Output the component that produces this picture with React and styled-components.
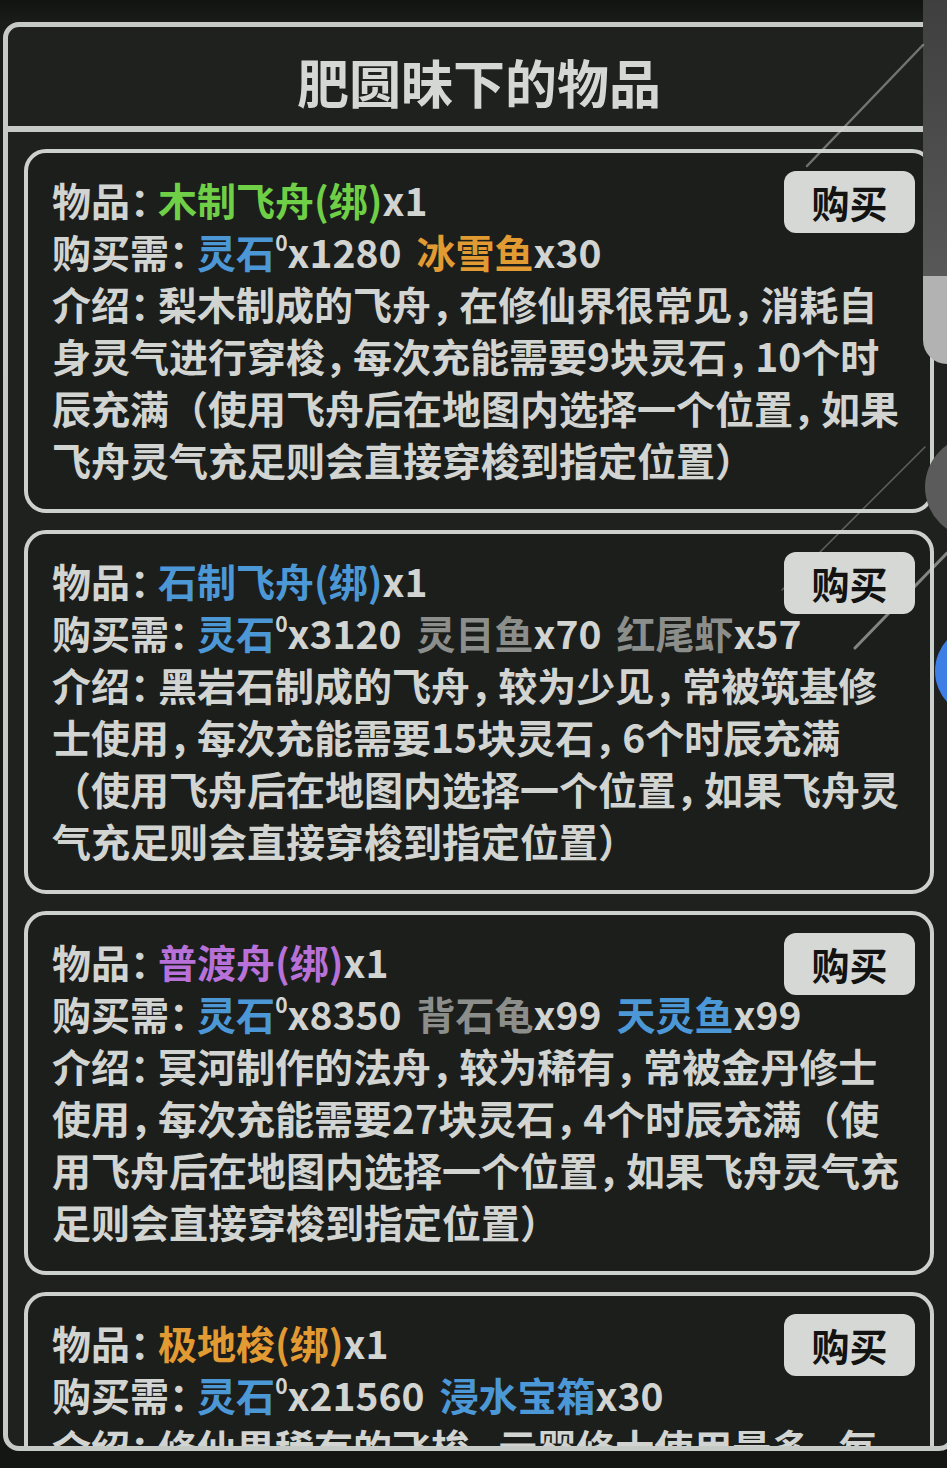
import React from "react";
import styled, { createGlobalStyle } from "styled-components";

const GlobalStyle = createGlobalStyle`
  html, body {
    margin: 0;
    padding: 0;
    background: #141614;
    overflow: hidden;
  }
  body {
    font-family: "Noto Sans CJK SC", "Noto Sans", sans-serif;
    font-weight: 700;
  }
`;

const C = {
  text: "#d1d4d1",
  green: "#6fcf46",
  blue: "#4c98d7",
  orange: "#e29a32",
  purple: "#b771d9",
  grey: "#8c8e8b",
};

const items = [
  {
    name: "木制飞舟(绑)",
    color: C.green,
    qty: "x1",
    cost: [
      { n: "灵石", c: C.blue, q: "x1280", sup: true },
      { n: "冰雪鱼", c: C.orange, q: "x30" },
    ],
    desc: [
      "介绍：梨木制成的飞舟，在修仙界很常见，消耗自",
      "身灵气进行穿梭，每次充能需要9块灵石，10个时",
      "辰充满（使用飞舟后在地图内选择一个位置，如果",
      "飞舟灵气充足则会直接穿梭到指定位置）",
    ],
  },
  {
    name: "石制飞舟(绑)",
    color: C.blue,
    qty: "x1",
    cost: [
      { n: "灵石", c: C.blue, q: "x3120", sup: true },
      { n: "灵目鱼", c: C.grey, q: "x70" },
      { n: "红尾虾", c: C.grey, q: "x57" },
    ],
    desc: [
      "介绍：黑岩石制成的飞舟，较为少见，常被筑基修",
      "士使用，每次充能需要15块灵石，6个时辰充满",
      "（使用飞舟后在地图内选择一个位置，如果飞舟灵",
      "气充足则会直接穿梭到指定位置）",
    ],
  },
  {
    name: "普渡舟(绑)",
    color: C.purple,
    qty: "x1",
    cost: [
      { n: "灵石", c: C.blue, q: "x8350", sup: true },
      { n: "背石龟", c: C.grey, q: "x99" },
      { n: "天灵鱼", c: C.blue, q: "x99" },
    ],
    desc: [
      "介绍：冥河制作的法舟，较为稀有，常被金丹修士",
      "使用，每次充能需要27块灵石，4个时辰充满（使",
      "用飞舟后在地图内选择一个位置，如果飞舟灵气充",
      "足则会直接穿梭到指定位置）",
    ],
  },
  {
    name: "极地梭(绑)",
    color: C.orange,
    qty: "x1",
    cost: [
      { n: "灵石", c: C.blue, q: "x21560", sup: true },
      { n: "浸水宝箱", c: C.blue, q: "x30" },
    ],
    desc: [
      "介绍：修仙界稀有的飞梭，元婴修士使用最多，每",
      "次充能需要45块灵石，2个时辰充满（使用飞舟后",
      "在地图内选择一个位置，如果飞舟灵气充足则会直",
      "接穿梭到指定位置）",
    ],
  },
];

const Screen = styled.div`
  position: relative;
  width: 947px;
  height: 1468px;
  overflow: hidden;
  background: linear-gradient(#111311 0px, #1a1c1a 22px, #141614 1450px);
  padding-top: 22px;
  box-sizing: border-box;
`;

const Frame = styled.div`
  margin-left: 3px;
  width: 952px;
  height: 1429px;
  box-sizing: border-box;
  border: 5px solid #c6cac6;
  border-radius: 16px;
  background: #1f211f;
  display: flex;
  flex-direction: column;
  overflow: hidden;
`;

const Header = styled.div`
  flex: none;
  height: 105px;
  box-sizing: border-box;
  padding-top: 10px;
  border-bottom: 6px solid #c6cac6;
  display: flex;
  align-items: center;
  justify-content: center;
  color: #d4d7d4;
  font-size: 52px;
  line-height: 1;
`;

const List = styled.div`
  flex: 1;
  min-height: 0;
  overflow: hidden;
  padding: 17px 16px 0;
  display: flex;
  flex-direction: column;
  gap: 17px;
`;

const Card = styled.div`
  flex: none;
  display: grid;
  grid-template-columns: 1fr auto;
  border: 4px solid #cdd1cd;
  border-radius: 22px;
  background: #1c1e1c;
  padding: 18px 15px 24px 24px;
`;

const Body = styled.div`
  grid-column: 1 / -1;
  grid-row: 1;
  padding-top: 2px;
  color: ${C.text};
  font-size: 39px;
  line-height: 52px;
`;

const Line = styled.div`
  white-space: nowrap;
`;

const Hl = styled.span`
  color: ${(p) => p.$c};
`;

const Cost = styled.span`
  & + & {
    margin-left: 15px;
  }
`;

const Punct = styled.span`
  letter-spacing: -0.28em;
`;

const Sup = styled.span`
  font-size: 21px;
  line-height: 0;
  vertical-align: 17px;
  color: ${C.text};
`;

const BuyButton = styled.button`
  grid-column: 2;
  grid-row: 1;
  align-self: start;
  z-index: 1;
  width: 131px;
  height: 62px;
  border: none;
  border-radius: 12px;
  background: #d5d8d5;
  color: #121312;
  font-family: inherit;
  font-weight: 700;
  font-size: 38px;
  line-height: 62px;
  padding: 0;
`;

const Edge = styled.div`
  position: absolute;
  left: ${(p) => p.$left}px;
  top: ${(p) => p.$top}px;
  width: ${(p) => p.$w}px;
  height: ${(p) => p.$h}px;
  background: ${(p) => p.$bg};
  border-radius: ${(p) => p.$r || "0"};
  pointer-events: none;
`;

const Streaks = styled.svg`
  position: absolute;
  left: 0;
  top: 0;
  pointer-events: none;
`;

const fmt = (s) =>
  s.split(/([，：])/).map((p, i) =>
    p === "，" || p === "：" ? <Punct key={i}>{p}</Punct> : p
  );

const Item = ({ item }) => (
  <Card>
    <Body>
      <Line>
        {fmt("物品：")}
        <Hl $c={item.color}>{item.name}</Hl>
        {item.qty}
      </Line>
      <Line>
        {fmt("购买需：")}
        {item.cost.map((c, i) => (
          <Cost key={i}>
            <Hl $c={c.c}>{c.n}</Hl>
            {c.sup && <Sup>0</Sup>}
            {c.q}
          </Cost>
        ))}
      </Line>
      {item.desc.map((d, i) => (
        <Line key={i}>{fmt(d)}</Line>
      ))}
    </Body>
    <BuyButton>购买</BuyButton>
  </Card>
);

export default function App() {
  return (
    <>
      <GlobalStyle />
      <Screen>
        <Frame>
          <Header>肥圆昧下的物品</Header>
          <List>
            {items.map((it) => (
              <Item key={it.name} item={it} />
            ))}
          </List>
        </Frame>

        <Edge $left={923} $top={0} $w={24} $h={276} $bg="linear-gradient(#3e3f3e, #575857)" />
        <Edge $left={923} $top={276} $w={24} $h={88} $bg="#b1b2b1" $r="0 0 0 26px" />
        <Edge $left={925} $top={436} $w={102} $h={102} $bg="#5a5b5a" $r="50%" />
        <Edge $left={935} $top={625} $w={92} $h={92} $bg="#3d7fe4" $r="50%" />

        <Streaks width="947" height="1468" viewBox="0 0 947 1468">
          <line x1="923" y1="45" x2="807" y2="166" stroke="rgba(215,218,215,0.45)" strokeWidth="2.5" strokeLinecap="round" />
          <line x1="925" y1="447" x2="782" y2="590" stroke="rgba(215,218,215,0.35)" strokeWidth="1.5" strokeLinecap="round" />
          <line x1="947" y1="553" x2="855" y2="648" stroke="rgba(215,218,215,0.55)" strokeWidth="3" strokeLinecap="round" />
        </Streaks>
      </Screen>
    </>
  );
}
